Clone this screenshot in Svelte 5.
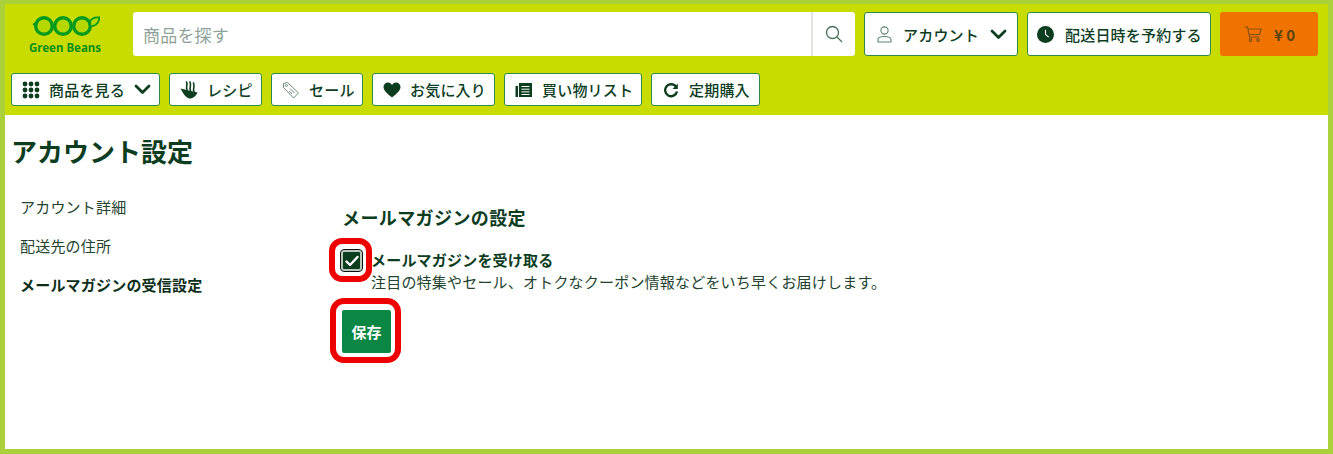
<script lang="ts">
  const navItems = [
    { label: "商品を見る", icon: "grid", chevron: true, width: 149 },
    { label: "レシピ", icon: "bowl", width: 93 },
    { label: "セール", icon: "tag", width: 92 },
    { label: "お気に入り", icon: "heart", width: 123 },
    { label: "買い物リスト", icon: "list", width: 138 },
    { label: "定期購入", icon: "repeat", width: 109 },
  ];
  const sideLinks = ["アカウント詳細", "配送先の住所", "メールマガジンの受信設定"];
  const dots = [0, 1, 2];
</script>

{#snippet chevron()}
  <svg class="chev" width="17" height="11" viewBox="0 0 17 11" fill="none">
    <path d="M2 2L8.500 8.500L15 2" stroke="#0d3d1f" stroke-width="2.800" stroke-linecap="round" stroke-linejoin="round"/>
  </svg>
{/snippet}

{#snippet navIcon(name: string)}
  {#if name === "grid"}
    <svg width="18" height="18" viewBox="0 0 18 18" fill="#0d3d1f">
      {#each dots as r}
        {#each dots as c}
          <circle cx={3 + c * 6} cy={3 + r * 6} r="2.400"/>
        {/each}
      {/each}
    </svg>
  {:else if name === "bowl"}
    <svg width="18" height="18" viewBox="0 0 18 18" fill="none">
      <path d="M0.500 7.500L17.500 11.500C16 15 13 17.500 10 17.500C6 17.500 3 12 0.500 7.500Z" fill="#0d3d1f"/>
      <path d="M7 8.500C5.500 6 8 4.500 6.500 1M10.500 9.500C9 7 11.500 5.500 10 1M14 10.500C12.500 8 15 6 13.500 2" stroke="#0d3d1f" stroke-width="1.600" stroke-linecap="round"/>
    </svg>
  {:else if name === "tag"}
    <svg width="18" height="18" viewBox="0 0 18 18" fill="none" stroke="#6d8a76" stroke-width="1">
      <path d="M1.500 2.500L5.500 1.500L16.500 12L11.500 17L1.500 6.500Z" stroke-linejoin="round"/>
      <circle cx="4.500" cy="4.500" r="1"/>
      <path d="M8 7.500L12.500 12M7 10L10 13"/>
    </svg>
  {:else if name === "heart"}
    <svg width="18" height="16" viewBox="0 0 18 16" fill="#0d3d1f">
      <path d="M9 15.500C4 11.500 0.500 8.500 0.500 5C0.500 2.500 2.500 0.500 5 0.500C6.700 0.500 8.200 1.400 9 3C9.800 1.400 11.300 0.500 13 0.500C15.500 0.500 17.500 2.500 17.500 5C17.500 8.500 14 11.500 9 15.500Z"/>
    </svg>
  {:else if name === "list"}
    <svg width="18" height="16" viewBox="0 0 18 16">
      <path d="M0.500 4H3V15H0.500Z" fill="#0d3d1f"/>
      <path d="M4 1H17V15H4Z" fill="#0d3d1f"/>
      <path d="M6.500 4.500H14.500M6.500 7.200H14.500M6.500 9.900H14.500M6.500 12.500H14.500" stroke="#fff" stroke-width="1"/>
    </svg>
  {:else}
    <svg width="18" height="16" viewBox="-1 0 18 16" fill="none">
      <path d="M13.500 5.500A6 6 0 1 0 14 9.500" stroke="#0d3d1f" stroke-width="2.400"/>
      <path d="M14.800 1.500V7H9.500Z" fill="#0d3d1f"/>
    </svg>
  {/if}
{/snippet}

<div class="frame">
  <header class="site-header">
    <div class="top-row">
      <div class="logo">
        <svg width="70" height="23" viewBox="0 0 70 23" fill="none">
          <path d="M2.500 9L8 5.500L8 16Z" fill="#009a1e"/>
          <circle cx="14" cy="11" r="8.300" fill="#b4d800" stroke="#009a1e" stroke-width="3.400"/>
          <circle cx="33" cy="11" r="8.300" fill="#b4d800" stroke="#009a1e" stroke-width="3.400"/>
          <circle cx="52" cy="11" r="8.300" fill="#b4d800" stroke="#009a1e" stroke-width="3.400"/>
          <path d="M60 6.500C61.500 3.500 65 2 69.500 2.500C69 7 66 11 60.500 11.500Z" fill="#b4d800" stroke="#009a1e" stroke-width="1.800"/>
        </svg>
        <span class="logo-text">Green Beans</span>
      </div>

      <div class="search">
        <span class="placeholder">商品を探す</span>
        <div class="search-btn">
          <svg width="18" height="18" viewBox="0 0 18 18" fill="none" stroke="#48705a" stroke-width="1.300">
            <circle cx="7.500" cy="7.500" r="6"/>
            <path d="M12 12L17 17"/>
          </svg>
        </div>
      </div>

      <button class="btn top account">
        <svg width="15" height="17" viewBox="0 0 15 17" fill="none" stroke="#5f8270" stroke-width="1.100">
          <circle cx="7.500" cy="4.500" r="3.600"/>
          <path d="M1 16V13.500C1 11.500 3 10.500 7.500 10.500C12 10.500 14 11.500 14 13.500V16Z"/>
        </svg>
        <span>アカウント</span>
        {@render chevron()}
      </button>

      <button class="btn top delivery">
        <svg width="17" height="17" viewBox="0 0 16 16">
          <circle cx="8" cy="8" r="8" fill="#0d3d1f"/>
          <path d="M8 3.500V8L11 10.500" stroke="#fff" stroke-width="1" fill="none"/>
        </svg>
        <span>配送日時を予約する</span>
      </button>

      <button class="cart">
        <svg width="18" height="16" viewBox="0 0 18 16" fill="none" stroke="#85501a" stroke-width="1.200">
          <path d="M0.500 1H3.500L5.500 11H15"/>
          <path d="M4 3H17L15.500 8.500H5"/>
          <circle cx="6.500" cy="14" r="1.300"/>
          <circle cx="14" cy="14" r="1.300"/>
        </svg>
        <span>¥ 0</span>
      </button>
    </div>

    <nav class="nav-row">
      {#each navItems as item}
        <button class="btn nav" style="width: {item.width}px">
          {@render navIcon(item.icon)}
          <span>{item.label}</span>
          {#if item.chevron}
            {@render chevron()}
          {/if}
        </button>
      {/each}
    </nav>
  </header>

  <main class="page">
    <h1>アカウント設定</h1>
    <div class="columns">
      <ul class="side">
        {#each sideLinks as link, i}
          <li class:current={i === sideLinks.length - 1}>{link}</li>
        {/each}
      </ul>

      <section class="settings">
        <h2>メールマガジンの設定</h2>
        <div class="check-row">
          <div class="ring check-ring">
            <div class="checkbox">
              <svg width="14" height="12" viewBox="0 0 14 12" fill="none">
                <path d="M1.500 6.500L5 10L12.500 2" stroke="#fff" stroke-width="2.400" stroke-linecap="round" stroke-linejoin="round"/>
              </svg>
            </div>
          </div>
          <div class="check-text">
            <div class="check-label">メールマガジンを受け取る</div>
            <div class="check-desc">注目の特集やセール、オトクなクーポン情報などをいち早くお届けします。</div>
          </div>
        </div>
        <div class="ring save-ring">
          <button class="save">保存</button>
        </div>
      </section>
    </div>
  </main>
</div>

<style>
  :global(body) {
    margin: 0;
    background: #fff;
  }

  .frame {
    box-sizing: border-box;
    width: 1333px;
    height: 454px;
    border: solid #aad13a;
    border-width: 4px 5px 5px 5px;
    background: #fff;
    color: #0d3d1f;
    font-family: "Noto Sans CJK JP", "Noto Sans", sans-serif;
    letter-spacing: 0.2px;
    overflow: hidden;
  }

  .site-header {
    height: 111px;
    box-sizing: border-box;
    background: #c8dc00;
    padding: 8px 10px 0 6px;
    display: flex;
    flex-direction: column;
    gap: 17px;
  }

  .top-row {
    display: flex;
    height: 44px;
    gap: 9px;
  }

  .logo {
    width: 74px;
    margin: 0 22px 0 17px;
    display: flex;
    flex-direction: column;
    align-items: center;
    padding-top: 3px;
    flex-shrink: 0;
    gap: 3px;
  }

  .logo-text {
    font-family: "Noto Sans", sans-serif;
    font-size: 11.500px;
    font-weight: 700;
    line-height: 14px;
    letter-spacing: 0;
    color: #0a8f1e;
    white-space: nowrap;
  }

  .search {
    width: 722px;
    flex-shrink: 0;
    background: #fff;
    border-radius: 3px;
    display: flex;
    align-items: center;
    box-sizing: border-box;
    padding-left: 10px;
  }

  .placeholder {
    flex: 1;
    font-size: 17px;
    color: #8fa39a;
  }

  .search-btn {
    width: 44px;
    height: 100%;
    border-left: 2px solid #e6e4e0;
    display: flex;
    align-items: center;
    justify-content: center;
    box-sizing: border-box;
  }

  .btn {
    display: flex;
    align-items: center;
    box-sizing: border-box;
    background: #fff;
    border: 1px solid #2f8a4a;
    border-radius: 3px;
    color: #0d3d1f;
    font-family: inherit;
    font-weight: 500;
    letter-spacing: inherit;
    padding: 0;
    flex-shrink: 0;
  }

  .btn.top {
    height: 44px;
    font-size: 15px;
    padding-left: 12px;
    gap: 11px;
  }

  .account {
    width: 154px;
  }

  .delivery {
    width: 184px;
  }

  .btn.top.delivery {
    padding-left: 9px;
  }

  .cart {
    width: 98px;
    height: 44px;
    flex-shrink: 0;
    box-sizing: border-box;
    background: #f07300;
    border: none;
    border-radius: 3px;
    display: flex;
    align-items: center;
    padding: 0 0 0 24px;
    gap: 12px;
    color: #5a4310;
    font-family: inherit;
    font-size: 15px;
    font-weight: 700;
  }

  .nav-row {
    display: flex;
    height: 33px;
    gap: 9px;
  }

  .btn.nav {
    height: 33px;
    font-size: 15px;
    padding-left: 10px;
    gap: 9px;
  }

  .page {
    padding: 18px 0 0 6px;
  }

  h1 {
    margin: 0;
    font-size: 26px;
    line-height: 36px;
    font-weight: 700;
    letter-spacing: 0;
    color: #0d3d1f;
  }

  .columns {
    display: flex;
    margin-top: 18px;
  }

  .side {
    list-style: none;
    margin: 0;
    padding: 0 0 0 9px;
    width: 331px;
    flex-shrink: 0;
    box-sizing: border-box;
    font-size: 15px;
    line-height: 39px;
    color: #23432f;
  }

  .side li.current {
    font-weight: 700;
    color: #0d2f1a;
  }

  .settings {
    padding-top: 17px;
  }

  h2 {
    margin: 0;
    font-size: 18px;
    line-height: 26px;
    font-weight: 700;
    letter-spacing: 0.4px;
    color: #0d3d1f;
  }

  .check-row {
    display: flex;
    margin-top: 19px;
  }

  .ring {
    position: relative;
    flex-shrink: 0;
  }

  .ring::after {
    content: "";
    position: absolute;
    border: 6px solid #ee0000;
    box-sizing: border-box;
    pointer-events: none;
  }

  .check-ring {
    width: 30px;
    margin-left: -1px;
  }

  .check-ring::after {
    left: -12px;
    top: -11px;
    width: 43px;
    height: 44px;
    border-radius: 13px;
  }

  .save-ring {
    width: 49px;
    margin: 17px 0 0 0;
  }

  .save-ring::after {
    left: -12px;
    top: -12px;
    width: 71px;
    height: 65px;
    border-radius: 14px;
  }

  .checkbox {
    width: 21px;
    height: 21px;
    margin-top: 1px;
    box-sizing: border-box;
    background: #0d3d1f;
    border: 2px solid #b8c8bd;
    outline: 1px solid #111;
    border-radius: 3px;
    display: flex;
    align-items: center;
    justify-content: center;
  }

  .check-text {
    font-size: 15px;
    line-height: 22px;
  }

  .check-label {
    font-weight: 700;
  }

  .check-desc {
    color: #23432f;
  }

  .save {
    display: block;
    width: 49px;
    height: 43px;
    background: #0a8745;
    color: #fff;
    border: none;
    border-radius: 2px;
    padding: 0;
    font-family: inherit;
    font-size: 15px;
    font-weight: 700;
  }
</style>
